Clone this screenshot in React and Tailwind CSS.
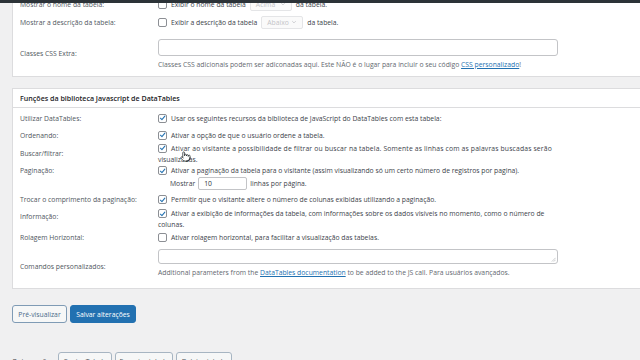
import React from "react";

function Check({ checked }) {
  return (
    <span className="inline-flex h-[9px] w-[9px] shrink-0 items-center justify-center rounded-[2px] border border-[#8c8f94] bg-white">
      {checked && (
        <svg viewBox="0 0 10 10" className="h-[8px] w-[8px]">
          <path d="M2 5.3 L4.2 7.4 L8.4 2.4" fill="none" stroke="#2271b1" strokeWidth="1.5" strokeLinecap="round" strokeLinejoin="round" />
        </svg>
      )}
    </span>
  );
}

function Select({ value, w }) {
  return (
    <span className={`inline-flex h-[13px] items-center justify-between rounded-[2px] border border-[#e4e5e7] bg-[#fafafa] px-[5px] text-[#c3c4c7] ${w}`}>
      <span>{value}</span>
      <svg viewBox="0 0 10 10" className="h-[6px] w-[6px]">
        <path d="M2 3.5 L5 6.5 L8 3.5" fill="none" stroke="#c3c4c7" strokeWidth="1.3" />
      </svg>
    </span>
  );
}

function Label({ children, extra = "" }) {
  return <div className={`w-[145px] shrink-0 pl-[7px] text-[#50575e] ${extra}`}>{children}</div>;
}

export default function App() {
  return (
    <div className="relative h-[360px] w-[640px] overflow-hidden bg-[#f0f0f1] font-['Open_Sans',sans-serif] text-[6.8px] leading-[11px] text-[#3c434a]">
      <div className="absolute inset-x-0 top-0 z-10 h-[3px] bg-[#2c3338]" />

      <div className="-mt-[6px] pl-3">
        {/* Card 1 */}
        <div className="border border-r-0 border-[#dcdcde] bg-white">
          <div className="flex h-[18px] items-center">
            <Label>Mostrar o nome da tabela:</Label>
            <div className="flex items-center gap-[4px]">
              <Check />
              <span>Exibir o nome da tabela</span>
              <Select value="Acima" w="w-[42px]" />
              <span>da tabela.</span>
            </div>
          </div>
          <div className="flex h-[18px] items-center">
            <Label>Mostrar a descrição da tabela:</Label>
            <div className="flex items-center gap-[4px]">
              <Check />
              <span>Exibir a descrição da tabela</span>
              <Select value="Abaixo" w="w-[42px]" />
              <span>da tabela.</span>
            </div>
          </div>
          <div className="flex h-[45px] items-center">
            <Label>Classes CSS Extra:</Label>
            <div className="flex flex-col gap-[3px] pt-[1px]">
              <div className="h-[17px] w-[400px] rounded-[3px] border border-[#c3c4c7] bg-white" />
              <div className="text-[#646970]">
                Classes CSS adicionais podem ser adiconadas aqui. Este NÃO é o lugar para incluir o seu código{" "}
                <span className="text-[#2271b1] underline">CSS personalizado</span>!
              </div>
            </div>
          </div>
        </div>

        {/* Card 2 */}
        <div className="mt-[11px] border border-r-0 border-[#dcdcde] bg-white">
          <div className="flex h-[19px] items-center border-b border-[#dcdcde] pl-[7px] text-[7.1px] font-semibold text-[#1d2327]">
            Funções da biblioteca Javascript de DataTables
          </div>

          <div className="flex h-[20px] items-center">
            <Label>Utilizar DataTables:</Label>
            <div className="flex items-center gap-[4px]">
              <Check checked />
              <span>Usar os seguintes recursos da biblioteca de JavaScript do DataTables com esta tabela:</span>
            </div>
          </div>

          <div className="flex h-[14px] items-center">
            <Label>Ordenando:</Label>
            <div className="flex items-center gap-[4px]">
              <Check checked />
              <span>Ativar a opção de que o usuário ordene a tabela.</span>
            </div>
          </div>

          <div className="flex h-[23px] items-center">
            <Label>Buscar/filtrar:</Label>
            <div className="w-[420px]">
              <div className="flex items-center gap-[4px]">
                <Check checked />
                <span className="whitespace-nowrap tracking-[0.15px]">Ativar ao visitante a possibilidade de filtrar ou buscar na tabela. Somente as linhas com as palavras buscadas serão</span>
              </div>
              <div>visualizadas.</div>
            </div>
          </div>

          <div className="flex h-[26px] items-start">
            <Label>Paginação:</Label>
            <div>
              <div className="flex items-center gap-[4px]">
                <Check checked />
                <span>Ativar a paginação da tabela para o visitante (assim visualizando só um certo número de registros por pagina).</span>
              </div>
              <div className="mt-[1px] flex items-center gap-[3px] pl-[12px]">
                <span>Mostrar</span>
                <span className="flex h-[13px] w-[49px] items-center rounded-[2px] border border-[#c3c4c7] pl-[5px] text-[#2c3338]">10</span>
                <span>linhas por página.</span>
              </div>
            </div>
          </div>

          <div className="flex h-[17px] items-center">
            <Label>Trocar o comprimento da paginação:</Label>
            <div className="flex items-center gap-[4px]">
              <Check checked />
              <span>Permitir que o visitante altere o número de colunas exibidas utilizando a paginação.</span>
            </div>
          </div>

          <div className="flex h-[22px] items-center">
            <Label extra="self-start pt-[3px]">Informação:</Label>
            <div>
              <div className="flex items-center gap-[4px]">
                <Check checked />
                <span className="whitespace-nowrap">Ativar a exibição de informações da tabela, com informações sobre os dados visíveis no momento, como o número de</span>
              </div>
              <div>colunas.</div>
            </div>
          </div>

          <div className="flex h-[14px] items-center">
            <Label>Rolagem Horizontal:</Label>
            <div className="flex items-center gap-[4px]">
              <Check />
              <span>Ativar rolagem horizontal, para facilitar a visualização das tabelas.</span>
            </div>
          </div>

          <div className="flex h-[44px] items-center">
            <Label>Comandos personalizados:</Label>
            <div className="flex flex-col gap-[3px] self-start pt-[5px]">
              <div className="relative h-[15px] w-[400px] rounded-[3px] border border-[#c3c4c7] bg-white">
                <svg viewBox="0 0 6 6" className="absolute bottom-[1px] right-[1px] h-[5px] w-[5px]">
                  <path d="M1 5.5 L5.5 1 M3.3 5.5 L5.5 3.3" stroke="#a7aaad" strokeWidth="0.7" />
                </svg>
              </div>
              <div className="text-[#646970]">
                Additional parameters from the <span className="text-[#2271b1] underline">DataTables documentation</span> to be added to the JS call. Para usuários avançados.
              </div>
            </div>
          </div>
        </div>

        {/* Buttons */}
        <div className="mt-[16px] flex gap-[3px]">
          <button className="flex h-[18px] w-[55px] items-center justify-center rounded-[3px] border border-[#7f9bb5] bg-[#f6f7f7] text-[#4a6b8a]">
            Pré-visualizar
          </button>
          <button className="flex h-[18px] w-[66px] items-center justify-center rounded-[3px] border border-[#2271b1] bg-[#2271b1] text-white">
            Salvar alterações
          </button>
        </div>

        <div className="mt-[29px] flex items-center gap-[3px]">
          <span className="w-[43px] whitespace-nowrap text-[#3c434a]">Outras ações:</span>
          <button className="flex h-[18px] w-[54px] items-center justify-center whitespace-nowrap rounded-[3px] border border-[#a7b5c2] bg-[#f6f7f7] text-[#50575e]">
            Copiar Tabela
          </button>
          <button className="flex h-[18px] w-[58px] items-center justify-center whitespace-nowrap rounded-[3px] border border-[#a7b5c2] bg-[#f6f7f7] text-[#50575e]">
            Exportar tabela
          </button>
          <button className="flex h-[18px] w-[56px] items-center justify-center whitespace-nowrap rounded-[3px] border border-[#a7b5c2] bg-[#f6f7f7] text-[#50575e]">
            Deletar tabela
          </button>
        </div>
      </div>

      {/* mouse cursor */}
      <svg viewBox="0 0 24 24" className="absolute left-[180px] top-[151px] h-[11px] w-[11px]">
        <path
          d="M22 14a8 8 0 0 1-8 8 M18 11v-1a2 2 0 0 0-2-2a2 2 0 0 0-2 2 M14 10V9a2 2 0 0 0-2-2a2 2 0 0 0-2 2v1 M10 9.5V4a2 2 0 0 0-2-2a2 2 0 0 0-2 2v10 M18 11a2 2 0 1 1 4 0v3a8 8 0 0 1-8 8h-2c-2.8 0-4.5-.86-5.99-2.34l-3.6-3.6a2 2 0 0 1 2.83-2.82L7 15"
          fill="white"
          stroke="#1d2327"
          strokeWidth="1.6"
          strokeLinecap="round"
          strokeLinejoin="round"
        />
      </svg>
    </div>
  );
}
